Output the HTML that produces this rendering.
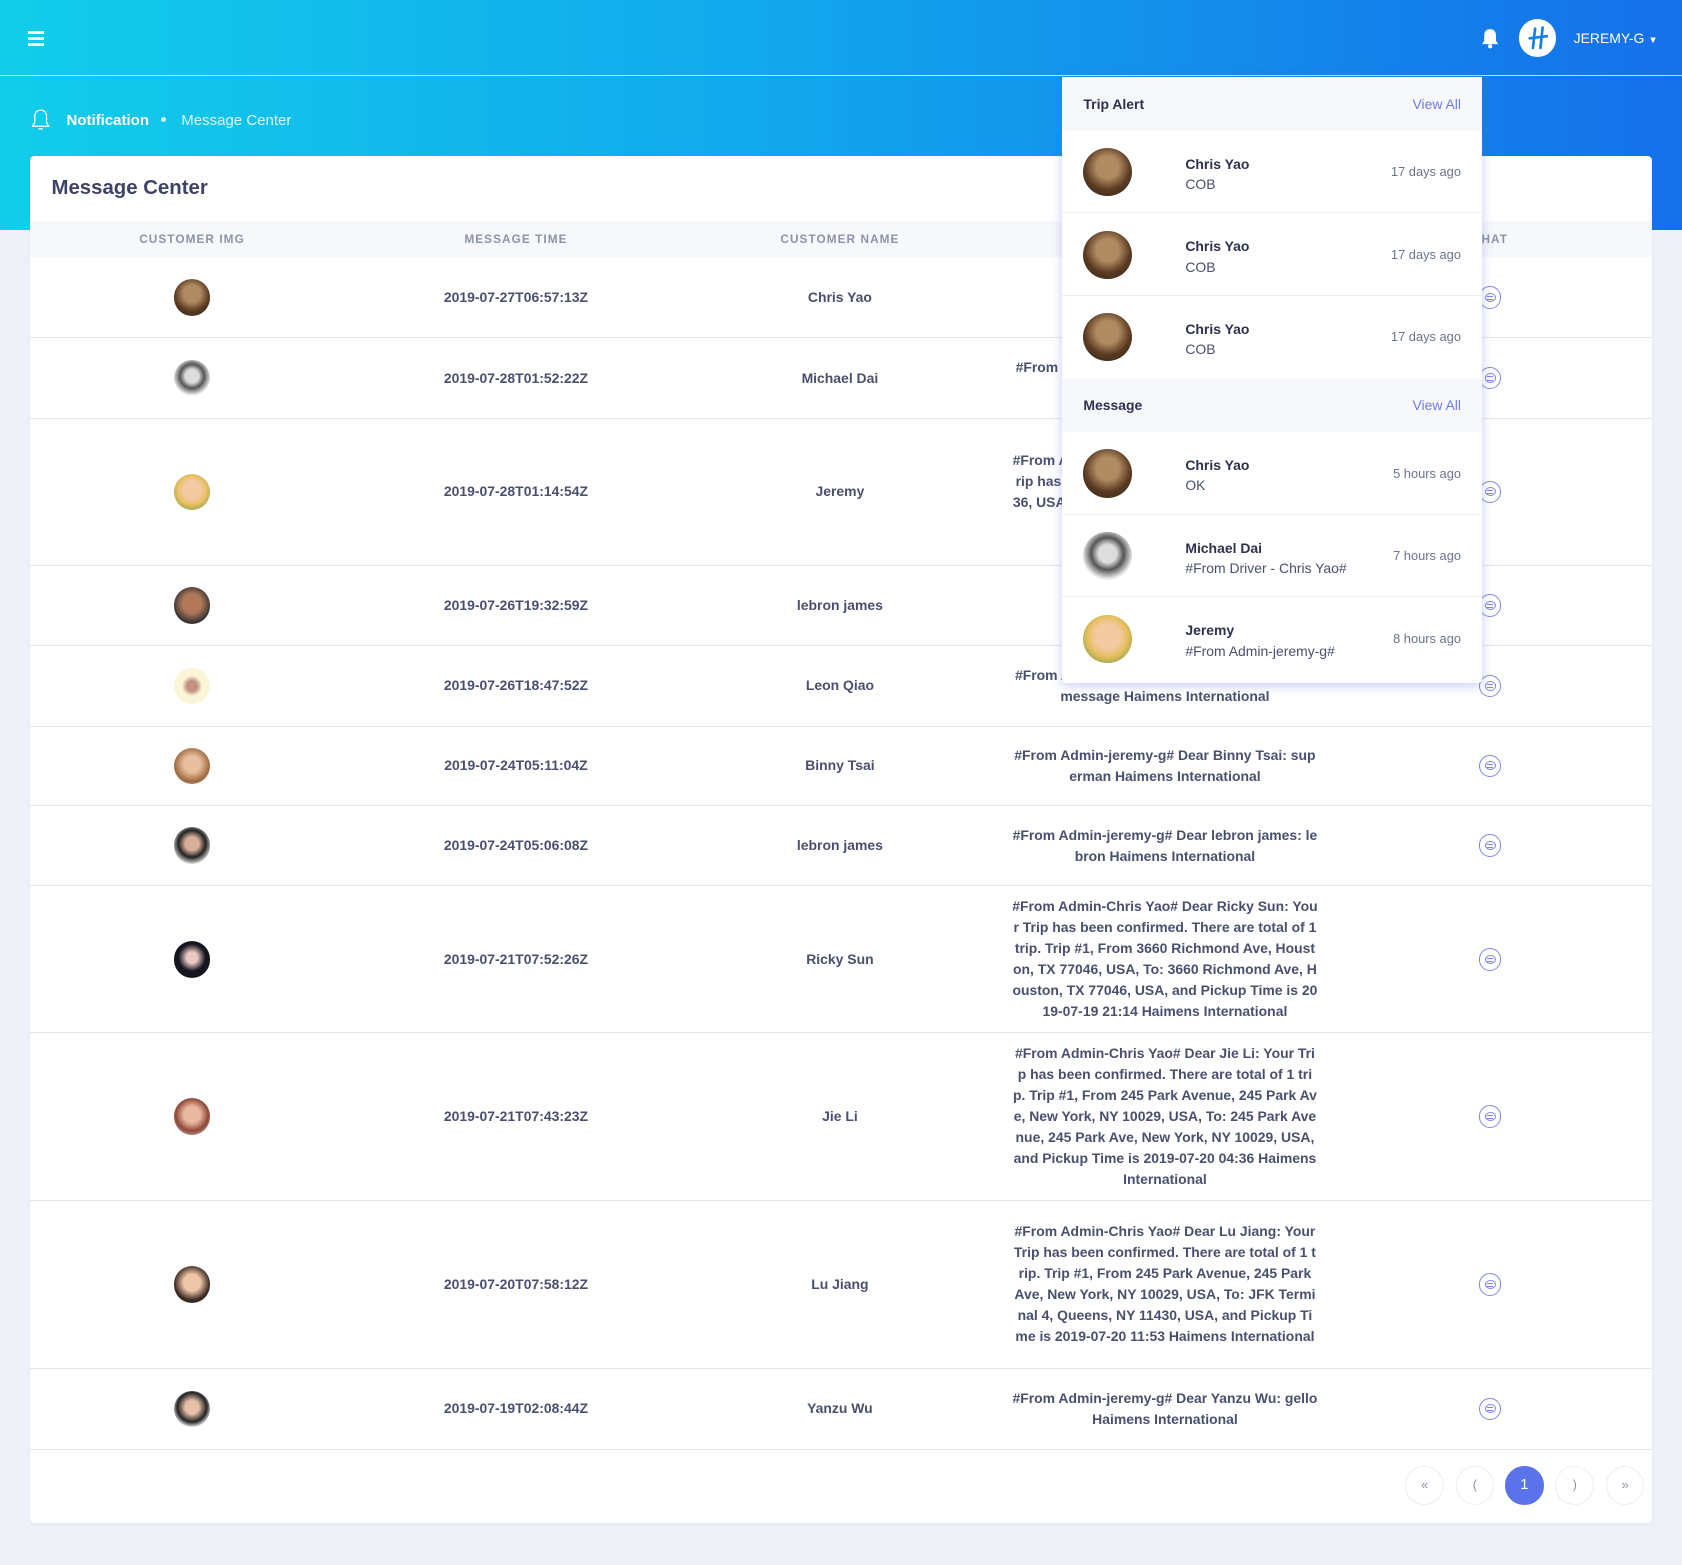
<!DOCTYPE html>
<html><head><meta charset="utf-8"><style>
*{box-sizing:border-box;margin:0;padding:0}
html,body{width:1682px;height:1565px;overflow:hidden}
body{zoom:1.0727;width:1568px;height:1459px;background:#eef1f8;font-family:"Liberation Sans",Arial,sans-serif;position:relative;color:#48506e}
.band{position:absolute;left:0;top:0;width:1568px;height:214px;background:linear-gradient(90deg,#12cdea 0%,#12a8ec 45%,#1570ea 100%)}
.hline{position:absolute;left:0;top:70px;width:1568px;height:1px;background:rgba(255,255,255,.75)}
.ham{position:absolute;left:26px;top:29px;width:15px}
.ham i{display:block;height:2.5px;background:#fff;margin-bottom:3px}
.card{position:absolute;left:28px;top:145px;width:1512px;height:1275px;background:#fff;border-radius:4px;box-shadow:0 1px 3px rgba(0,0,0,.05)}
.title{position:absolute;left:20px;top:20px;font-size:19px;font-weight:bold;color:#3d4465}
table{position:absolute;left:0;top:61px;width:1512px;border-collapse:collapse}
th{background:#f7f8fb;height:34px;font-size:11px;font-weight:bold;letter-spacing:1px;color:#8a94a6;text-transform:uppercase}
td{border-bottom:1px solid #e3e6ef;text-align:center;font-size:13px;font-weight:bold;color:#48506e;line-height:19.6px}
td.m{padding:0 0;}
td.m div{width:285px;margin:0 auto;word-break:break-all}
.av{display:inline-block;width:34px;height:34px;border-radius:50%;vertical-align:middle}
.ch{display:inline-block;width:21px;height:21px;border:1.3px solid #7d86e8;border-radius:50%;position:relative;vertical-align:middle}
.ch:before{content:"";position:absolute;left:4.5px;top:5px;width:9px;height:7px;border:1px solid #7d86e8;border-radius:50%}
.ch:after{content:"";position:absolute;left:7px;top:8px;width:5px;height:2px;border-top:1px solid #7d86e8;border-bottom:1px solid #7d86e8}
.pg{position:absolute;top:1222px;width:36px;height:36px;border-radius:50%;border:1px solid #eceef4;text-align:center;line-height:34px;font-size:12px;color:#8a94a6}
.dd{position:absolute;left:990px;top:72px;width:392px;height:565px;background:#fff;box-shadow:0 2px 10px rgba(80,110,230,.35);border-radius:0 0 4px 4px}
.dh{height:50px;background:#f7f8fb;display:flex;justify-content:space-between;align-items:center;padding:0 20px;font-size:13px;font-weight:bold;color:#2c3150}
.dh span{font-weight:normal;color:#6f7be6}
.it{height:77px;border-bottom:1px solid #eceef4;position:relative}
.it .av{position:absolute;left:20px;top:16px;width:45px;height:45px}
.it b{position:absolute;left:115px;top:23px;font-size:13px;color:#2c3150}
.it s{text-decoration:none;position:absolute;left:115px;top:42px;font-size:13px;color:#48506e}
.it em{font-style:normal;position:absolute;right:20px;top:31px;font-size:12px;color:#6b7390}
.a1{background:radial-gradient(circle at 50% 40%,#b08a60 0 30%,#5a3a22 60%,#2c2418)}
.a2{background:radial-gradient(circle at 50% 45%,#ddd 0 25%,#555 45%,#eee 70%)}
.a3{background:radial-gradient(circle at 50% 45%,#f2c9a0 0 35%,#e8c060 55%,#5f8a40)}
.a4{background:radial-gradient(circle at 50% 45%,#b07858 0 35%,#333 70%)}
.a5{background:radial-gradient(circle,#c09080 0 20%,#fbf6d8 40%)}
.a6{background:radial-gradient(circle at 50% 45%,#e8c0a0 0 30%,#a06a40 65%,#ccc)}
.a7{background:radial-gradient(circle at 50% 45%,#d8b098 0 25%,#222 50%,#ddd 75%)}
.a8{background:radial-gradient(circle at 50% 45%,#e8c8c0 0 20%,#151520 50%)}
.a9{background:radial-gradient(circle at 50% 45%,#e8b8a0 0 30%,#904838 60%,#ddd)}
.a10{background:radial-gradient(circle at 50% 45%,#f0c8a8 0 30%,#3a2820 65%)}
.a11{background:radial-gradient(circle at 50% 45%,#e8c0a8 0 25%,#222 55%,#eee 75%)}
</style></head><body>
<div class="band"></div><div class="hline"></div>
<div class="ham"><i></i><i></i><i></i></div>
<svg style="position:absolute;left:1381px;top:26px" width="17" height="20" viewBox="0 0 17 20"><path d="M8.5 1c-3.5 0-5.5 2.5-5.5 6v5l-2 3h15l-2-3V7c0-3.5-2-6-5.5-6z" fill="#fff"/><circle cx="8.5" cy="17" r="2" fill="#fff"/></svg>
<div style="position:absolute;left:1416px;top:18px;width:35px;height:35px;border-radius:50%;background:#fff"><svg width="35" height="35" viewBox="0 0 35 35"><path d="M15 9l-2 18M22 8l-2 19M10 18l16-2" stroke="#1680ea" stroke-width="2.5" fill="none" stroke-linecap="round"/></svg></div>
<div style="position:absolute;left:1467px;top:28px;font-size:13px;color:#fff">JEREMY-G <span style="font-size:9px">▼</span></div>
<svg style="position:absolute;left:29px;top:101px" width="18" height="22" viewBox="0 0 18 22"><path d="M9 2c-3.5 0-5.5 2.5-5.5 6v5.5L1.5 17h15l-2-3.5V8C14.5 4.5 12.5 2 9 2z M7 19.5h4" stroke="#fff" stroke-width="1.2" fill="none"/></svg>
<div style="position:absolute;left:62px;top:104px;font-size:14px;font-weight:bold;color:#fff">Notification</div>
<div style="position:absolute;left:150px;top:109px;width:5px;height:5px;border-radius:50%;background:rgba(255,255,255,.8)"></div>
<div style="position:absolute;left:169px;top:104px;font-size:14px;color:rgba(255,255,255,.85)">Message Center</div>
<div class="card">
<div class="title">Message Center</div>
<table>
<tr><th style="width:302px">Customer Img</th><th style="width:302px">Message Time</th><th style="width:302px">Customer Name</th><th style="width:304px">Message</th><th>Chat</th></tr>
<tr style="height:75px"><td><span class="av a1"></span></td><td>2019-07-27T06:57:13Z</td><td>Chris Yao</td><td class="m"><div>OK</div></td><td><span class="ch"></span></td></tr>
<tr style="height:75px"><td><span class="av a2"></span></td><td>2019-07-28T01:52:22Z</td><td>Michael Dai</td><td class="m"><div>#From Driver - Chris Yao# Dear Michael Dai hello</div></td><td><span class="ch"></span></td></tr>
<tr style="height:137px"><td><span class="av a3"></span></td><td>2019-07-28T01:14:54Z</td><td>Jeremy</td><td class="m"><div>#From Admin-Chris Yao# Dear Jeremy: Your Trip has been confirmed. Trip #1, From NY 10036, USA, To: NY 10036, USA Haimens International</div></td><td><span class="ch"></span></td></tr>
<tr style="height:75px"><td><span class="av a4"></span></td><td>2019-07-26T19:32:59Z</td><td>lebron james</td><td class="m"><div>OK</div></td><td><span class="ch"></span></td></tr>
<tr style="height:75px"><td><span class="av a5"></span></td><td>2019-07-26T18:47:52Z</td><td>Leon Qiao</td><td class="m"><div>#From Admin-jeremy-g# Dear Leon Qiao: test message Haimens International</div></td><td><span class="ch"></span></td></tr>
<tr style="height:74px"><td><span class="av a6"></span></td><td>2019-07-24T05:11:04Z</td><td>Binny Tsai</td><td class="m"><div>#From Admin-jeremy-g# Dear Binny Tsai: superman Haimens International</div></td><td><span class="ch"></span></td></tr>
<tr style="height:75px"><td><span class="av a7"></span></td><td>2019-07-24T05:06:08Z</td><td>lebron james</td><td class="m"><div>#From Admin-jeremy-g# Dear lebron james: lebron Haimens International</div></td><td><span class="ch"></span></td></tr>
<tr style="height:137px"><td><span class="av a8"></span></td><td>2019-07-21T07:52:26Z</td><td>Ricky Sun</td><td class="m"><div>#From Admin-Chris Yao# Dear Ricky Sun: Your Trip has been confirmed. There are total of 1 trip. Trip #1, From 3660 Richmond Ave, Houston, TX 77046, USA, To: 3660 Richmond Ave, Houston, TX 77046, USA, and Pickup Time is 2019-07-19 21:14 Haimens International</div></td><td><span class="ch"></span></td></tr>
<tr style="height:156px"><td><span class="av a9"></span></td><td>2019-07-21T07:43:23Z</td><td>Jie Li</td><td class="m"><div>#From Admin-Chris Yao# Dear Jie Li: Your Trip has been confirmed. There are total of 1 trip. Trip #1, From 245 Park Avenue, 245 Park Ave, New York, NY 10029, USA, To: 245 Park Avenue, 245 Park Ave, New York, NY 10029, USA, and Pickup Time is 2019-07-20 04:36 Haimens International</div></td><td><span class="ch"></span></td></tr>
<tr style="height:157px"><td><span class="av a10"></span></td><td>2019-07-20T07:58:12Z</td><td>Lu Jiang</td><td class="m"><div>#From Admin-Chris Yao# Dear Lu Jiang: Your Trip has been confirmed. There are total of 1 trip. Trip #1, From 245 Park Avenue, 245 Park Ave, New York, NY 10029, USA, To: JFK Terminal 4, Queens, NY 11430, USA, and Pickup Time is 2019-07-20 11:53 Haimens International</div></td><td><span class="ch"></span></td></tr>
<tr style="height:75px"><td><span class="av a11"></span></td><td>2019-07-19T02:08:44Z</td><td>Yanzu Wu</td><td class="m"><div>#From Admin-jeremy-g# Dear Yanzu Wu: gello Haimens International</div></td><td><span class="ch"></span></td></tr>
</table>
<div class="pg" style="left:1282px">«</div>
<div class="pg" style="left:1329px">(</div>
<div class="pg" style="left:1375px;background:#5b73e8;border-color:#5b73e8;color:#fff;font-size:14px">1</div>
<div class="pg" style="left:1422px">)</div>
<div class="pg" style="left:1469px">»</div>
</div>
<div class="dd">
<div class="dh">Trip Alert<span>View All</span></div>
<div class="it"><span class="av a1"></span><b>Chris Yao</b><s>COB</s><em>17 days ago</em></div>
<div class="it"><span class="av a1"></span><b>Chris Yao</b><s>COB</s><em>17 days ago</em></div>
<div class="it" style="border:0"><span class="av a1"></span><b>Chris Yao</b><s>COB</s><em>17 days ago</em></div>
<div class="dh">Message<span>View All</span></div>
<div class="it"><span class="av a1"></span><b>Chris Yao</b><s>OK</s><em>5 hours ago</em></div>
<div class="it"><span class="av a2"></span><b>Michael Dai</b><s>#From Driver - Chris Yao#</s><em>7 hours ago</em></div>
<div class="it" style="border:0;overflow:hidden"><span class="av a3"></span><b>Jeremy</b><s>#From Admin-jeremy-g#</s><em>8 hours ago</em></div>
</div>
</body></html>
